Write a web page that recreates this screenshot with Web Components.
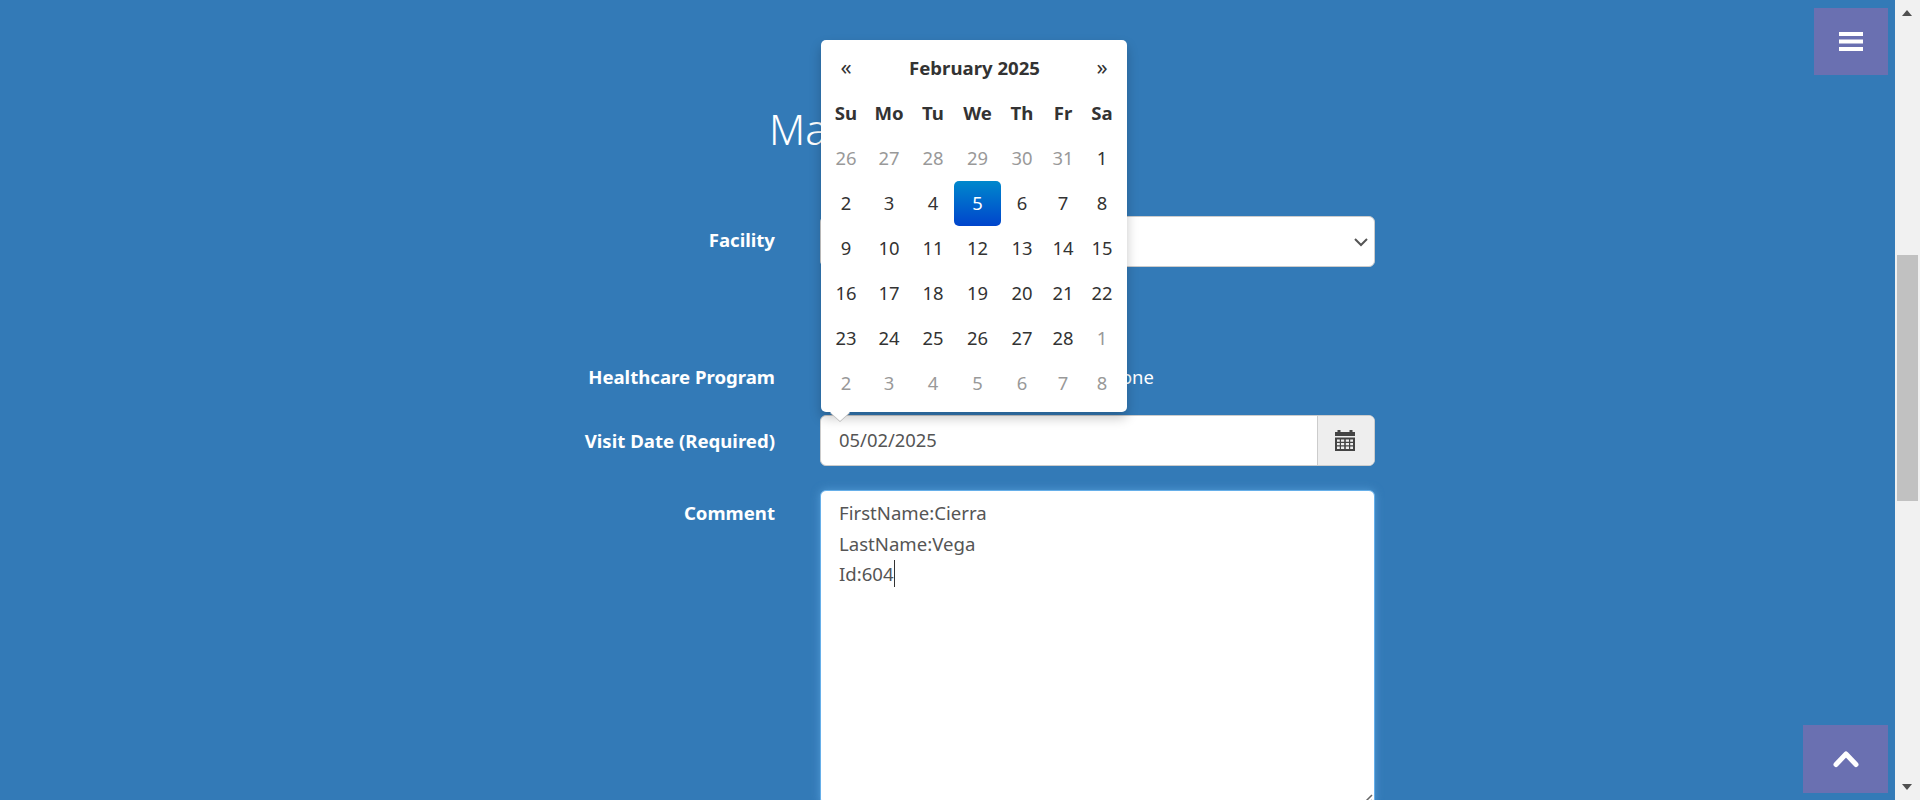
<!DOCTYPE html>
<html>
<head>
<meta charset="utf-8">
<style>
    html, body { margin: 0; height: 800px; overflow: hidden; }
    body {
        background: #337ab7;
        font-family: "Noto Sans", sans-serif;
        font-size: 18.4px;
    }
</style>
</head>
<body>
<visit-page>
    <form-row label="Facility" slot="rows" style="--row-h: 51px; --row-mb: 86px; --label-lh: 48px">
        <select-box></select-box>
    </form-row>
    <form-row label="Healthcare Program" slot="rows" style="--row-h: 50px; --row-mb: 12px; --label-lh: 48px">
        <radio-text>None</radio-text>
    </form-row>
    <form-row label="Visit Date (Required)" slot="rows" style="--row-h: 51px; --row-mb: 24px; --label-lh: 51px">
        <date-input value="05/02/2025"></date-input>
    </form-row>
    <form-row label="Comment" slot="rows" style="--row-h: 315px; --row-mb: 0; --label-lh: 46px">
        <comment-box></comment-box>
    </form-row>
</visit-page>
<date-picker></date-picker>
<corner-button kind="menu"></corner-button>
<corner-button kind="up"></corner-button>
<page-scrollbar></page-scrollbar>

<script>
class VisitPage extends HTMLElement {
    constructor() {
        super();
        this.attachShadow({ mode: 'open' });
    }

    connectedCallback() {
        this.shadowRoot.innerHTML = `
            <style>
                :host {
                    display: block;
                    width: 1895px;
                    height: 800px;
                    overflow: hidden;
                    box-sizing: border-box;
                    padding: 100px 0 0 582px;
                }

                h1 {
                    margin: 0 0 58px 187px;
                    height: 58px;
                    font-size: 41.5px;
                    line-height: 58px;
                    font-weight: 300;
                    color: #fff;
                }
            </style>
            <h1>Ma</h1>
            <slot name="rows"></slot>
        `;
    }
}

class FormRow extends HTMLElement {
    constructor() {
        super();
        this.attachShadow({ mode: 'open' });
    }

    connectedCallback() {
        this.shadowRoot.innerHTML = `
            <style>
                :host {
                    display: grid;
                    grid-template-columns: 193px 555px;
                    column-gap: 45px;
                    height: var(--row-h);
                    margin-bottom: var(--row-mb);
                }

                label {
                    text-align: right;
                    font-size: 18.6px;
                    font-weight: 700;
                    line-height: var(--label-lh);
                    color: #fff;
                    white-space: nowrap;
                }
            </style>
            <label>${this.getAttribute('label')}</label>
            <div><slot></slot></div>
        `;
    }
}

class SelectBox extends HTMLElement {
    constructor() {
        super();
        this.attachShadow({ mode: 'open' });
    }

    connectedCallback() {
        this.shadowRoot.innerHTML = `
            <style>
                :host {
                    display: flex;
                    align-items: center;
                    justify-content: flex-end;
                    height: 51px;
                    box-sizing: border-box;
                    padding-right: 6px;
                    background: #fff;
                    border: 1px solid #ccc;
                    border-radius: 6px;
                }
            </style>
            <svg width="14" height="10" viewBox="0 0 14 10">
                <path d="M1 2 L7 8 L13 2" fill="none" stroke="#555" stroke-width="2"/>
            </svg>
        `;
    }
}

class RadioText extends HTMLElement {
    constructor() {
        super();
        this.attachShadow({ mode: 'open' });
    }

    connectedCallback() {
        this.shadowRoot.innerHTML = `
            <style>
                :host {
                    display: block;
                    padding-left: 287px;
                    line-height: 48px;
                    color: #fff;
                }
            </style>
            <slot></slot>
        `;
    }
}

class DateInput extends HTMLElement {
    constructor() {
        super();
        this.attachShadow({ mode: 'open' });
    }

    connectedCallback() {
        this.shadowRoot.innerHTML = `
            <style>
                :host {
                    display: flex;
                    height: 51px;
                    box-sizing: border-box;
                    background: #fff;
                    border: 1px solid #ccc;
                    border-radius: 6px;
                    overflow: hidden;
                    color: #555;
                }

                .value {
                    flex: 1;
                    padding-left: 18px;
                    line-height: 47px;
                }

                .addon {
                    display: flex;
                    align-items: center;
                    justify-content: center;
                    width: 57px;
                    padding-right: 2px;
                    box-sizing: border-box;
                    background: #eee;
                    border-left: 1px solid #ccc;
                }
            </style>
            <div class="value">${this.getAttribute('value')}</div>
            <div class="addon">
                <svg width="20" height="21" viewBox="0 0 20 21">
                    <path fill="#444" fill-rule="evenodd" d="M2.500 0h3v2h9V0h3v2H20V6H0V2H2.500Z M0 7.500H20V21H0Z M2 9.500v2.200h2.800V9.500Z M6 9.500v2.200h3.200V9.500Z M10.800 9.500v2.200H14V9.500Z M15.200 9.500v2.200H18V9.500Z M2 13v2.200h2.800V13Z M6 13v2.200h3.200V13Z M10.800 13v2.200H14V13Z M15.200 13v2.200H18V13Z M2 16.500v2.500h2.800v-2.500Z M6 16.500v2.500h3.200v-2.500Z M10.800 16.500v2.500H14v-2.500Z M15.200 16.500v2.500H18v-2.500Z"/>
                </svg>
            </div>
        `;
    }
}

class CommentBox extends HTMLElement {
    constructor() {
        super();
        this.attachShadow({ mode: 'open' });
    }

    connectedCallback() {
        this.shadowRoot.innerHTML = `
            <style>
                :host {
                    display: block;
                    position: relative;
                    height: 315px;
                    box-sizing: border-box;
                    padding: 7px 18px;
                    background: #fff;
                    border: 1px solid #66afe9;
                    border-radius: 6px;
                    box-shadow: 0 0 8px rgba(102, 175, 233, .6);
                    color: #555;
                    font-size: 18.6px;
                    line-height: 30.6px;
                }

                .caret { display: inline-block; line-height: 27px; border-right: 1px solid #333; }

                .grip {
                    position: absolute;
                    right: 1px;
                    bottom: 0;
                }
            </style>
            <div>FirstName:Cierra</div>
            <div>LastName:Vega</div>
            <div><span class="caret">Id:604</span></div>
            <svg class="grip" width="10" height="10" viewBox="0 0 10 10">
                <path d="M1 9 L9 1 M6 9 L9 6" stroke="#666" stroke-width="1.500"/>
            </svg>
        `;
    }
}

class DatePicker extends HTMLElement {
    constructor() {
        super();
        this.attachShadow({ mode: 'open' });
    }

    connectedCallback() {
        const days = [
            26, 27, 28, 29, 30, 31, 1,
            2, 3, 4, 5, 6, 7, 8,
            9, 10, 11, 12, 13, 14, 15,
            16, 17, 18, 19, 20, 21, 22,
            23, 24, 25, 26, 27, 28, 1,
            2, 3, 4, 5, 6, 7, 8
        ];
        const cells = days.map((d, i) => {
            const old = i < 6 || i > 33 ? ' old' : '';
            const active = i === 10 ? ' active' : '';
            return `<div class="cell${old}${active}">${d}</div>`;
        }).join('');
        const names = ['Su', 'Mo', 'Tu', 'We', 'Th', 'Fr', 'Sa'];

        this.shadowRoot.innerHTML = `
            <style>
                :host {
                    position: absolute;
                    left: 821px;
                    top: 40px;
                    width: 306px;
                    height: 372px;
                    box-sizing: border-box;
                    padding: 6px 5px;
                    background: #fff;
                    border-radius: 5px;
                    box-shadow: 0 6px 12px rgba(0, 0, 0, .22);
                    color: #333;
                    font-size: 18.4px;
                }

                :host::after {
                    content: '';
                    position: absolute;
                    left: 9px;
                    bottom: -9px;
                    border: 10px solid transparent;
                    border-bottom: 0;
                    border-top: 9px solid #fff;
                    filter: drop-shadow(0 1px 0 #bbb);
                }

                .grid {
                    display: grid;
                    grid-template-columns: 40px 46px 42px 47px 42px 40px 38px;
                    grid-auto-rows: 45px;
                }

                .cell {
                    display: flex;
                    align-items: center;
                    justify-content: center;
                    padding-bottom: 2px;
                    box-sizing: border-box;
                }

                .title { grid-column: span 5; }
                .bold { font-weight: 700; font-size: 18.6px; }
                .nav { font-size: 22px; padding-bottom: 5px; }
                .old { color: #999; }

                .active {
                    color: #fff;
                    background: linear-gradient(#08c, #04c);
                    border-radius: 5px;
                }
            </style>
            <div class="grid">
                <div class="cell nav">«</div>
                <div class="cell title bold">February 2025</div>
                <div class="cell nav">»</div>
                ${names.map(n => `<div class="cell bold">${n}</div>`).join('')}
                ${cells}
            </div>
        `;
    }
}

class CornerButton extends HTMLElement {
    constructor() {
        super();
        this.attachShadow({ mode: 'open' });
    }

    connectedCallback() {
        const menu = this.getAttribute('kind') === 'menu';
        const icon = menu
            ? '<svg width="24" height="19" viewBox="0 0 24 19"><path d="M0 0h24v4H0Z M0 7.500h24v4H0Z M0 15h24v4H0Z" fill="#fff"/></svg>'
            : '<svg width="26" height="18" viewBox="0 0 26 18"><path d="M3 14.500 L13 4 L23 14.500" fill="none" stroke="#fff" stroke-width="5" stroke-linecap="round" stroke-linejoin="round"/></svg>';

        this.shadowRoot.innerHTML = `
            <style>
                :host {
                    position: fixed;
                    display: flex;
                    align-items: center;
                    justify-content: center;
                    right: 32px;
                    background: #6a70b1;
                    top: ${menu ? 8 : 725}px;
                    width: ${menu ? 74 : 85}px;
                    height: ${menu ? 67 : 68}px;
                }
            </style>
            ${icon}
        `;
    }
}

class PageScrollbar extends HTMLElement {
    constructor() {
        super();
        this.attachShadow({ mode: 'open' });
    }

    connectedCallback() {
        this.shadowRoot.innerHTML = `
            <style>
                :host {
                    position: fixed;
                    top: 0;
                    right: 0;
                    bottom: 0;
                    width: 25px;
                    background: #f1f1f1;
                }

                .thumb {
                    position: absolute;
                    left: 2px;
                    right: 2px;
                    top: 255px;
                    height: 246px;
                    background: #c1c1c1;
                }

                .arrow {
                    position: absolute;
                    left: 7px;
                    border-left: 5.500px solid transparent;
                    border-right: 5.500px solid transparent;
                }

                .up { top: 10px; border-bottom: 6px solid #505050; }
                .down { bottom: 10px; border-top: 6px solid #505050; }
            </style>
            <div class="arrow up"></div>
            <div class="thumb"></div>
            <div class="arrow down"></div>
        `;
    }
}

customElements.define('visit-page', VisitPage);
customElements.define('form-row', FormRow);
customElements.define('select-box', SelectBox);
customElements.define('radio-text', RadioText);
customElements.define('date-input', DateInput);
customElements.define('comment-box', CommentBox);
customElements.define('date-picker', DatePicker);
customElements.define('corner-button', CornerButton);
customElements.define('page-scrollbar', PageScrollbar);
</script>
</body>
</html>
